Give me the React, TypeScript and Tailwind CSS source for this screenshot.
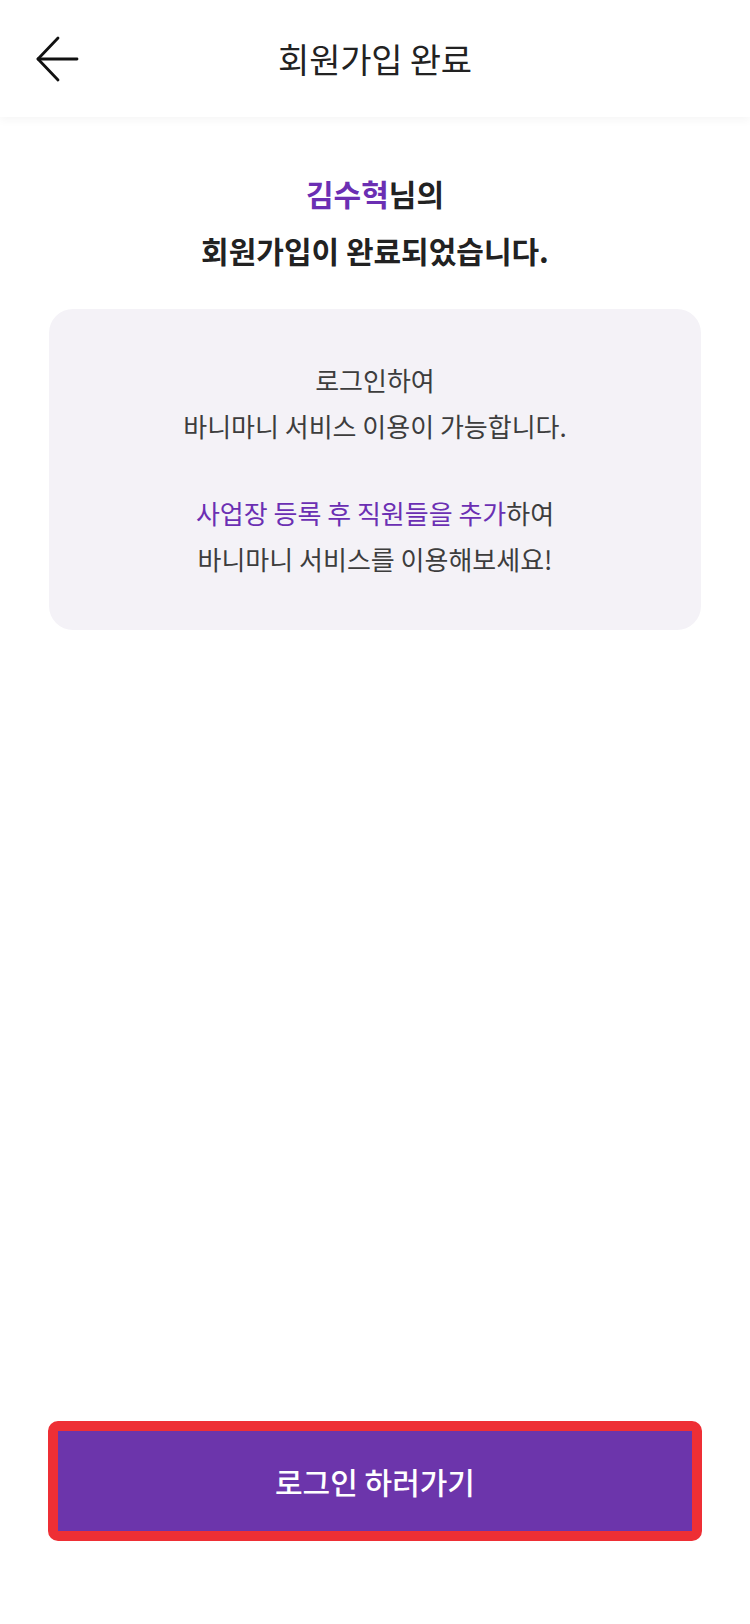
const BackArrow = () => (
  <svg width="44" height="48" viewBox="0 0 44 48" fill="none" stroke="#111" strokeWidth="2.8" strokeLinecap="round" strokeLinejoin="round">
    <path d="M22 3 L2 24 L22 45" />
    <path d="M2 24 H41" />
  </svg>
);

const App = () => {
  return (
    <div className="w-full min-h-[1624px] bg-white flex flex-col font-['Noto_Sans_CJK_KR',sans-serif] text-[#222]">
      {/* header */}
      <header className="h-[117px] grid grid-cols-[120px_1fr_120px] items-center bg-white shadow-[0_4px_8px_rgba(0,0,0,0.035)]">
        <button className="pl-[36px] flex items-center">
          <BackArrow />
        </button>
        <h1 className="text-center text-[34px] font-normal text-[#222] tracking-[-0.2px]">회원가입 완료</h1>
        <div />
      </header>

      <div className="mt-[48px] text-center text-[30px] font-bold leading-[57px] text-[#222]">
        <p>
          <span className="text-[#6b2fb3]">김수혁</span>님의
        </p>
        <p>회원가입이 완료되었습니다.</p>
      </div>

      <div className="mx-[49px] mt-[30px] rounded-[24px] bg-[#f4f2f7] py-12 text-center text-[26px] leading-[46px] text-[#3d3d3d]">
        <p>
          로그인하여
          <br />
          바니마니 서비스 이용이 가능합니다.
        </p>
        <p className="mt-[41px]">
          <span className="text-[#6b2fb3]">사업장 등록 후 직원들을 추가</span>하여
          <br />
          바니마니 서비스를 이용해보세요!
        </p>
      </div>

      <div className="mt-auto px-[48px] pb-[83px]">
        <button className="w-full h-[120px] rounded-[10px] border-[10px] border-[#ee2f35] bg-[#6c35ab] text-white text-[30px] font-medium">
          로그인 하러가기
        </button>
      </div>
    </div>
  );
};

export default App;
